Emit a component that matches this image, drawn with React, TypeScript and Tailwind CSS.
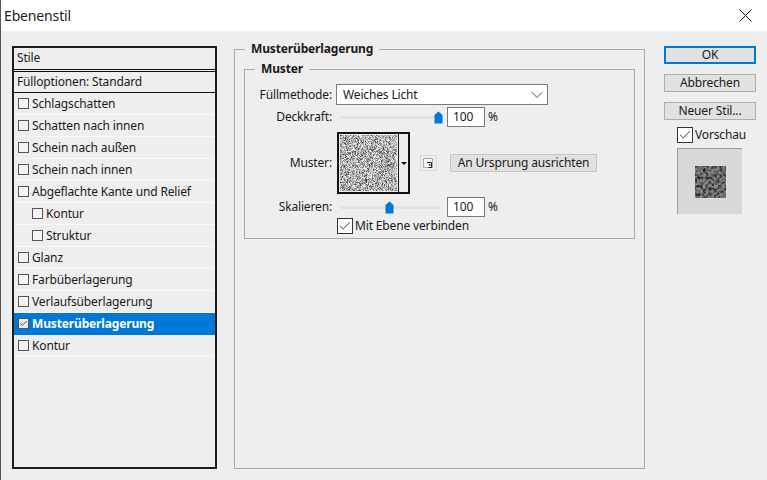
import { ChevronDown, Check } from 'lucide-react';

const styles = [
  { label: 'Schlagschatten' },
  { label: 'Schatten nach innen' },
  { label: 'Schein nach außen' },
  { label: 'Schein nach innen' },
  { label: 'Abgeflachte Kante und Relief' },
  { label: 'Kontur', sub: true },
  { label: 'Struktur', sub: true },
  { label: 'Glanz' },
  { label: 'Farbüberlagerung' },
  { label: 'Verlaufsüberlagerung' },
  { label: 'Musterüberlagerung', active: true },
  { label: 'Kontur' },
];

// fine speckle for the pattern swatch, one path per grey level
function speckle(w: number, h: number) {
  const levels = ['#4a4a4a', '#7e7e7e', '#a4a4a4', '#c6c6c6', '#ececec'];
  const paths: string[] = levels.map(() => '');
  let seed = 12345;
  const rand = () => {
    seed = (seed * 1664525 + 1013904223) % 4294967296;
    return seed / 4294967296;
  };
  for (let y = 0; y < h; y++) {
    for (let x = 0; x < w; x++) {
      const r = rand();
      const i = r < 0.08 ? 0 : r < 0.28 ? 1 : r < 0.55 ? 2 : r < 0.78 ? 3 : 4;
      paths[i] += `M${x} ${y}h1v1h-1z`;
    }
  }
  return levels.map((fill, i) => ({ fill, d: paths[i] }));
}

function Swatch() {
  return (
    <svg width="57" height="56" className="block">
      {speckle(57, 56).map((p) => (
        <path key={p.fill} fill={p.fill} d={p.d} />
      ))}
    </svg>
  );
}

function PreviewTexture() {
  return (
    <svg width="31" height="32" className="block">
      <filter id="preview" x="0" y="0" width="100%" height="100%" colorInterpolationFilters="sRGB">
        <feTurbulence type="fractalNoise" baseFrequency="0.36" numOctaves={3} seed={9} />
        <feColorMatrix values="1 0 0 0 0 1 0 0 0 0 1 0 0 0 0 0 0 0 0 1" />
        <feComponentTransfer>
          <feFuncR type="table" tableValues="0 0.08 0.22 0.42 0.52 0.6 0.68" />
          <feFuncG type="table" tableValues="0 0.08 0.22 0.42 0.52 0.6 0.68" />
          <feFuncB type="table" tableValues="0 0.08 0.22 0.42 0.52 0.6 0.68" />
        </feComponentTransfer>
      </filter>
      <rect width="31" height="32" filter="url(#preview)" />
    </svg>
  );
}

function StyleRow({ label, sub, active }: { label: string; sub?: boolean; active?: boolean }) {
  return (
    <div
      className={`flex h-[22px] items-center border-b ${
        active ? 'border-[#0078d7] bg-[#0078d7] font-bold text-white' : 'border-[#f8f8f8] text-[#1a1a1a]'
      } ${sub ? 'pl-[18px]' : 'pl-[4px]'}`}
    >
      <span
        className={`mr-[3px] flex h-[11px] w-[11px] shrink-0 items-center justify-center border border-[#555] ${
          active ? 'bg-[#ececec]' : 'bg-[#f4f4f4]'
        }`}
      >
        {active && <Check size={9} strokeWidth={2} className="text-[#222]" />}
      </span>
      {label}
    </div>
  );
}

function Slider({ pos }: { pos: number }) {
  return (
    <div className="relative mx-[4px] h-[3px] w-[99px] bg-[#e2e2e2]">
      <svg
        width="9"
        height="13"
        viewBox="0 0 9 13"
        className="absolute top-[-5px]"
        style={{ left: pos - 4 }}
      >
        <path d="M0.5 4 L4.5 0.5 L8.5 4 V12.5 H0.5 Z" fill="#0078d7" />
      </svg>
    </div>
  );
}

function PercentInput() {
  return (
    <div className="ml-[4px] flex items-center">
      <div className="flex h-[20px] w-[38px] items-center border border-[#7a7a7a] bg-white pl-[5px] text-[#1a1a1a]">
        100
      </div>
      <span className="ml-[3px]">%</span>
    </div>
  );
}

function SideButton({ label, primary }: { label: string; primary?: boolean }) {
  return (
    <button
      className={`flex h-[18px] w-[92px] items-center justify-center bg-[#e1e1e1] text-[#1a1a1a] ${
        primary ? 'border-2 border-[#0078d7]' : 'border border-[#adadad]'
      }`}
    >
      {label}
    </button>
  );
}

export default function App() {
  return (
    <div
      className="flex h-[480px] w-[767px] flex-col overflow-hidden border-l border-[#555] bg-[#eeeeee] text-[12px] leading-none tracking-[-0.15px] text-[#1a1a1a]"
      style={{ fontFamily: '"Noto Sans", "Liberation Sans", sans-serif' }}
    >
      <div className="flex h-[31px] items-center justify-between bg-white pl-[3px] pr-[15px] text-[14px] text-[#222]">
        <span>Ebenenstil</span>
        <svg width="13" height="13" viewBox="0 0 13 13" stroke="#111" fill="none">
          <path d="M0.5 0.5L12.5 12.5M12.5 0.5L0.5 12.5" />
        </svg>
      </div>

      <div className="flex pl-[11px] pt-[15px]">
        {/* Stilliste */}
        <div className="flex h-[423px] w-[205px] shrink-0 flex-col border-2 border-[#1c1c1c]">
          <div className="flex h-[22px] items-center border-b border-[#111] pb-[2px] pl-[3px]">Stile</div>
          <div className="mt-[1px] flex h-[22px] items-center border-y border-[#111] pl-[3px]">Fülloptionen: Standard</div>
          {styles.map((s, i) => (
            <StyleRow key={i} {...s} />
          ))}
        </div>

        {/* Mittelteil */}
        <fieldset className="ml-[17px] mt-[-4px] h-[427px] w-[411px] shrink-0 border border-[#a8a8a8] px-[9px] pb-[9px]">
          <legend className="ml-[1px] px-[6px] text-[12px] font-bold leading-[14px] text-[#1a1a1a]">Musterüberlagerung</legend>
          <fieldset className="mt-[6px] h-[177px] border border-[#a8a8a8] pt-[8px]">
            <legend className="ml-[10px] px-[6px] text-[12px] font-bold leading-[14px]">Muster</legend>
            <div className="flex flex-col">
              <div className="flex h-[21px] items-center">
                <div className="w-[87px] text-right">Füllmethode:</div>
                <div className="ml-[4px] flex h-[21px] w-[212px] items-center justify-between border border-[#7a7a7a] bg-white pl-[6px]">
                  Weiches Licht
                  <ChevronDown size={20} strokeWidth={1} className="text-[#333]" />
                </div>
              </div>
              <div className="mt-[2px] flex h-[20px] items-center">
                <div className="w-[87px] text-right">Deckkraft:</div>
                <div className="ml-[4px]">
                  <Slider pos={98} />
                </div>
                <PercentInput />
              </div>
              <div className="mt-[5px] flex h-[62px] items-center">
                <div className="w-[87px] text-right">Muster:</div>
                <div className="ml-[5px] flex h-[62px] w-[73px] border-2 border-[#111] bg-[#ececec]">
                  <div className="m-[1px] overflow-hidden">
                    <Swatch />
                  </div>
                  <div className="flex flex-1 items-center justify-center border-l border-[#111]">
                    <span className="h-0 w-0 border-x-[3px] border-t-[3px] border-x-transparent border-t-[#111]" />
                  </div>
                </div>
                <div className="ml-[10px] flex h-[16px] w-[17px] items-center justify-center border border-[#d8d8d8] bg-[#eeeeee]">
                  <svg width="11" height="11" viewBox="0 0 11 11" fill="none">
                    <path d="M0.5 0.5H9.5V9.5H0.5Z" fill="#f5f5f5" stroke="#aaa" />
                    <path d="M4 4.5H8.5V9.5H5.5" stroke="#222" />
                    <path d="M6 6.5H7V8" stroke="#222" />
                  </svg>
                </div>
                <button className="ml-[13px] flex h-[18px] w-[147px] items-center justify-center border border-[#c4c4c4] bg-[#e1e1e1] text-[#1a1a1a]">
                  An Ursprung ausrichten
                </button>
              </div>
              <div className="mt-[3px] flex h-[20px] items-center">
                <div className="w-[87px] text-right">Skalieren:</div>
                <div className="ml-[4px]">
                  <Slider pos={49} />
                </div>
                <PercentInput />
              </div>
              <div className="flex h-[17px] items-center pl-[92px]">
                <span className="flex h-[16px] w-[16px] items-center justify-center border border-[#333] bg-white">
                  <Check size={14} strokeWidth={1.5} className="text-[#222]" />
                </span>
                <span className="ml-[2px]">Mit Ebene verbinden</span>
              </div>
            </div>
          </fieldset>
        </fieldset>

        {/* Rechte Spalte */}
        <div className="ml-[19px] flex w-[92px] shrink-0 flex-col">
          <SideButton label="OK" primary />
          <div className="mt-[10px]">
            <SideButton label="Abbrechen" />
          </div>
          <div className="mt-[10px]">
            <SideButton label="Neuer Stil..." />
          </div>
          <div className="mt-[7px] flex items-center pl-[13px]">
            <span className="flex h-[16px] w-[16px] items-center justify-center border border-[#333] bg-white">
              <Check size={14} strokeWidth={1.5} className="text-[#222]" />
            </span>
            <span className="ml-[2px]">Vorschau</span>
          </div>
          <div className="ml-[13px] mt-[5px] flex h-[66px] w-[65px] items-center justify-center border-l border-t border-[#9a9a9a] bg-[#d8d8d8]">
            <PreviewTexture />
          </div>
        </div>
      </div>
    </div>
  );
}
